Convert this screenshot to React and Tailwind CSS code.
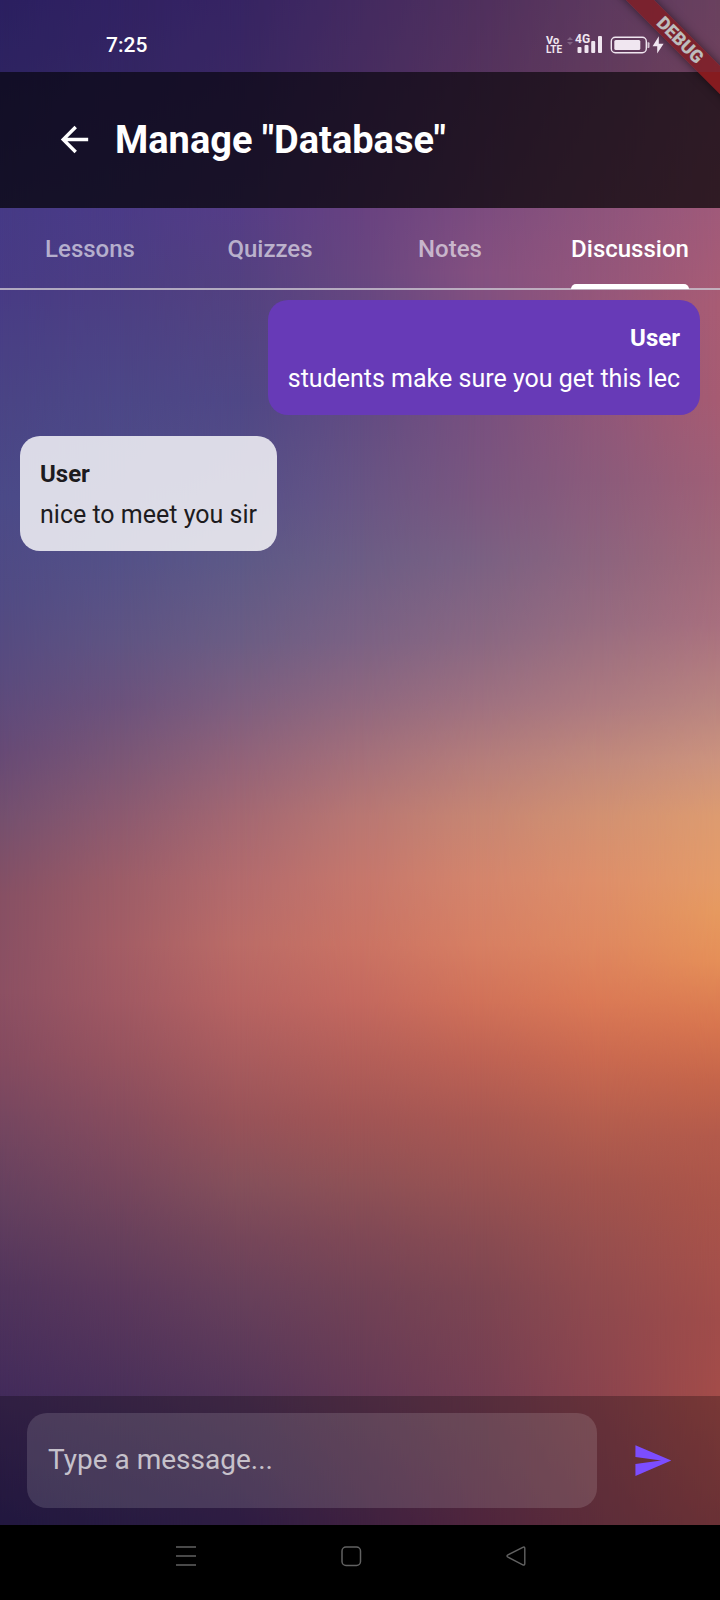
import { useState } from "react";

// Vertical colour ramps of the sunset backdrop, one per column, as [percent of height, colour].
const COLUMNS = [
  [[0, "#3a2b82"], [13, "#463a86"], [18, "#483b85"], [25, "#4a4485"], [31, "#4b4a88"], [37.5, "#514b84"], [42.5, "#5a4b7e"], [47, "#674a76"], [51, "#74506f"], [56, "#875064"], [62, "#8c5063"], [66, "#854b60"], [70.5, "#744660"], [75, "#64405f"], [80.5, "#51345c"], [87, "#432b5b"], [95, "#2e2056"]],
  [[0, "#432e86"], [13, "#4b3b87"], [18, "#4c3e83"], [25, "#4c4787"], [31, "#4f4d89"], [35, "#545188"], [40, "#5f5483"], [44, "#6c527c"], [47.5, "#7b5776"], [51, "#8c5a70"], [55, "#9c5d68"], [59, "#a35d65"], [62.5, "#a05963"], [66, "#96535f"], [70, "#864c5e"], [74, "#76465d"], [77.5, "#67405c"], [81, "#5b385c"], [87, "#4a305a"], [95, "#362558"]],
  [[0, "#4a3186"], [13, "#553d86"], [18, "#534180"], [25, "#4f4786"], [31, "#565088"], [35, "#5d5987"], [40, "#6b5d84"], [44, "#7e5f7f"], [47.5, "#926379"], [51, "#a46872"], [55, "#b36b6d"], [59, "#bb6c67"], [62.5, "#b76462"], [66, "#a95c5e"], [70, "#985359"], [74, "#85505b"], [77.5, "#75465a"], [81, "#67405b"], [87, "#543559"], [95, "#3f275a"]],
  [[0, "#5b3982"], [13, "#684281"], [17, "#684680"], [21, "#624880"], [26, "#624c83"], [31, "#685584"], [35, "#6c5d85"], [40, "#7b6284"], [44, "#90687f"], [47.5, "#a5707a"], [51, "#b97773"], [55, "#c6776c"], [59, "#ca7364"], [62.5, "#c4695f"], [66, "#b45f59"], [70, "#a15555"], [74, "#8e5156"], [77.5, "#7e4856"], [81, "#714256"], [87, "#643956"], [95, "#552d57"]],
  [[0, "#6c417e"], [13, "#7c4c7f"], [17, "#845080"], [21, "#7d5080"], [26, "#78507f"], [31, "#7a577f"], [35, "#7a6183"], [40, "#8a6882"], [44, "#9f7180"], [47.5, "#b57d7b"], [51, "#c78673"], [55, "#d4856c"], [59, "#d77f63"], [62.5, "#d17259"], [66, "#bf6354"], [70, "#a95852"], [74, "#985252"], [77.5, "#884b52"], [81, "#7c4552"], [87, "#743e53"], [95, "#6c3353"]],
  [[0, "#7d4d7f"], [13, "#8e547c"], [19, "#96577a"], [25, "#905679"], [30, "#8b5b7b"], [35, "#8d647e"], [39, "#976c80"], [44, "#ad7a80"], [47.5, "#c1897c"], [51, "#d29172"], [55, "#de8f6a"], [59, "#df8860"], [62.5, "#db7a56"], [66, "#cb6a50"], [70, "#b55e4e"], [74, "#a3544d"], [77.5, "#984f4e"], [82, "#8f494e"], [87, "#8b444e"], [95, "#7e3d4e"]],
  [[0, "#8f5880"], [13, "#a05a7a"], [19, "#a85c74"], [25, "#a65b72"], [30, "#9f5f76"], [35, "#a0687a"], [39, "#a86f7e"], [44, "#b98580"], [47.5, "#cc937e"], [51, "#dd9b70"], [55, "#e49b68"], [57, "#e6995f"], [60, "#e58f58"], [64, "#d8764f"], [67.5, "#c5654a"], [71, "#b35a4b"], [75, "#aa5449"], [79, "#a5504a"], [82.5, "#a04c4a"], [87, "#a34c49"], [95, "#904348"]],
];

function Backdrop() {
  return (
    <div aria-hidden="true" className="absolute inset-0 -z-10">
      {COLUMNS.map((stops, i) => {
        const step = 100 / (COLUMNS.length - 1);
        const ramp = stops.map(([at, color]) => `${color} ${at}%`).join(", ");
        const mask =
          i === 0 ? "none" : `linear-gradient(to right, transparent ${(i - 1) * step}%, black ${i * step}%)`;
        return (
          <div
            key={i}
            className="absolute inset-0"
            style={{ backgroundImage: `linear-gradient(to bottom, ${ramp})`, maskImage: mask }}
          />
        );
      })}
    </div>
  );
}

function StatusBar() {
  return (
    <div className="relative z-20 flex h-[72px] items-center justify-between bg-black/26 pt-[18px] pr-14 pl-[106px] text-[#f0e6f0]">
      <span className="text-[21px] leading-6 font-medium text-white">7:25</span>
      <div className="flex h-[18px] items-end">
        <div className="flex w-[14px] flex-col font-['Liberation_Sans_Narrow','Roboto',sans-serif] text-[11px] leading-[9px] font-bold">
          <span>Vo</span>
          <span className="text-[10px] leading-[9px]">LTE</span>
        </div>
        <svg className="mb-[9px] ml-[7px] h-2 w-[6px] opacity-25" viewBox="0 0 6 8" fill="currentColor">
          <path d="M3 0 6 3H0zM3 8 0 5h6z" />
        </svg>
        <div className="relative ml-[3px] h-[18px] w-[26px]">
          <span className="absolute -top-[3px] -left-px font-['Liberation_Sans_Narrow','Roboto',sans-serif] text-[12px] leading-3 font-bold">
            4G
          </span>
          <svg className="h-[18px] w-[26px]" viewBox="0 0 26 18" fill="currentColor">
            <rect x="1.5" y="11" width="4" height="6" rx="1" />
            <rect x="8.5" y="9" width="4" height="8" rx="1" />
            <rect x="15.2" y="5" width="4" height="12" rx="1" />
            <rect x="22" y="0" width="4" height="17" rx="1" />
          </svg>
        </div>
        <svg className="ml-2 h-[18px] w-[54px]" viewBox="0 0 54 18" fill="currentColor">
          <rect x="1.3" y="1.2" width="35" height="15.6" rx="4" fill="none" stroke="currentColor" strokeWidth="1.4" />
          <rect x="4.3" y="4" width="26" height="10" rx="1.5" />
          <path d="M37.5 6.3h1a1 1 0 0 1 1 1v3.8a1 1 0 0 1-1 1h-1z" opacity=".8" />
          <path d="M48.8.3 42.6 10.3h4.6v7.2l6.4-9.8h-4.8z" />
        </svg>
      </div>
    </div>
  );
}

const TABS = ["Lessons", "Quizzes", "Notes", "Discussion"];

function Tabs({ active, onSelect }) {
  return (
    <div role="tablist" className="flex h-[82px] border-b-2 border-[#cac4d0]/80">
      {TABS.map((name) => (
        <button
          key={name}
          type="button"
          role="tab"
          aria-selected={name === active}
          onClick={() => onSelect(name)}
          className={
            name === active
              ? "flex flex-1 justify-center text-2xl font-medium text-white"
              : "flex flex-1 justify-center text-2xl font-medium text-white/60"
          }
        >
          <span className="relative flex h-[81px] items-center">
            {name}
            {name === active && <span className="absolute inset-x-0 bottom-0 h-[5px] rounded-t-[5px] bg-white" />}
          </span>
        </button>
      ))}
    </div>
  );
}

function Message({ author, text, mine }) {
  return (
    <li
      className={
        mine
          ? "flex flex-col gap-[7px] self-end rounded-[20px] bg-[#673ab7] px-5 pt-[21px] pb-[19px] text-right text-[25px] leading-[34px] text-white"
          : "flex flex-col gap-[7px] self-start rounded-[20px] bg-white/80 px-5 pt-[21px] pb-[19px] text-[25px] leading-[34px] text-[#1d1b20]"
      }
    >
      <strong className="text-2xl leading-[34px] font-bold">{author}</strong>
      <span>{text}</span>
    </li>
  );
}

function DebugRibbon() {
  return (
    <div aria-hidden="true" className="pointer-events-none absolute top-0 right-0 z-10 size-[110px] overflow-hidden">
      <div className="absolute top-[30px] -right-[60px] flex h-5 w-[200px] rotate-45 items-center justify-center bg-[#b71c1c]/65 text-[18px] leading-5 font-black text-white shadow-[0_0_10px_rgba(0,0,0,0.5)]">
        DEBUG
      </div>
    </div>
  );
}

export default function App() {
  const [tab, setTab] = useState("Discussion");
  const [draft, setDraft] = useState("");

  return (
    <div className="relative isolate flex min-h-screen flex-col overflow-hidden font-['Roboto',sans-serif]">
      <Backdrop />
      <StatusBar />
      <DebugRibbon />
      <header className="flex h-[136px] items-center gap-5 bg-black/70 px-[54px] pb-px text-white">
        <button type="button" aria-label="Back">
          <svg className="size-[41px]" viewBox="0 0 24 24" fill="currentColor">
            <path d="M20 11H7.83l5.59-5.59L12 4l-8 8 8 8 1.41-1.41L7.83 13H20v-2z" />
          </svg>
        </button>
        <h1 className="text-[38px] leading-[48px] font-bold">Manage "Database"</h1>
      </header>
      <Tabs active={tab} onSelect={setTab} />
      <ul className="flex flex-1 flex-col gap-[21px] px-5 pt-[10px]">
        <Message mine author="User" text="students make sure you get this lec" />
        <Message author="User" text="nice to meet you sir" />
      </ul>
      <form
        className="flex items-center gap-[14px] bg-black/26 px-[27px] py-[17px]"
        onSubmit={(e) => e.preventDefault()}
      >
        <input
          type="text"
          aria-label="Message"
          placeholder="Type a message..."
          value={draft}
          onChange={(e) => setDraft(e.target.value)}
          className="h-[95px] min-w-0 flex-1 rounded-[20px] bg-white/13 px-[21px] pb-[2px] text-[28px] text-white outline-none placeholder:text-white/70"
        />
        <button type="submit" aria-label="Send" className="flex size-[82px] items-center justify-center text-[#7c4dff]">
          <svg className="size-[41px]" viewBox="0 0 24 24" fill="currentColor">
            <path d="M2.01 21L23 12 2.01 3 2 10l15 2-15 2z" />
          </svg>
        </button>
      </form>
      <nav className="flex h-[75px] items-center justify-center gap-36 bg-black pr-[18px] pb-[13px] text-[#626262]">
        <button type="button" aria-label="Recent apps">
          <svg className="size-[21px]" viewBox="0 0 21 21" fill="none" stroke="currentColor" strokeWidth="1.5">
            <path d="M0 1h20M0 10h20M0 19h20" />
          </svg>
        </button>
        <button type="button" aria-label="Home">
          <svg className="size-[21px]" viewBox="0 0 21 21" fill="none" stroke="currentColor" strokeWidth="1.5">
            <rect x="1" y="1" width="18.5" height="18.5" rx="4" />
          </svg>
        </button>
        <button type="button" aria-label="Back to previous">
          <svg className="size-[21px]" viewBox="0 0 21 21" fill="none" stroke="currentColor" strokeWidth="1.4">
            <path d="M16.8 1.3 2 8.8q-2 1.2 0 2.4l14.8 7.6q2 .8 2-1.3v-15q0-2-2-1.2z" />
          </svg>
        </button>
      </nav>
    </div>
  );
}
